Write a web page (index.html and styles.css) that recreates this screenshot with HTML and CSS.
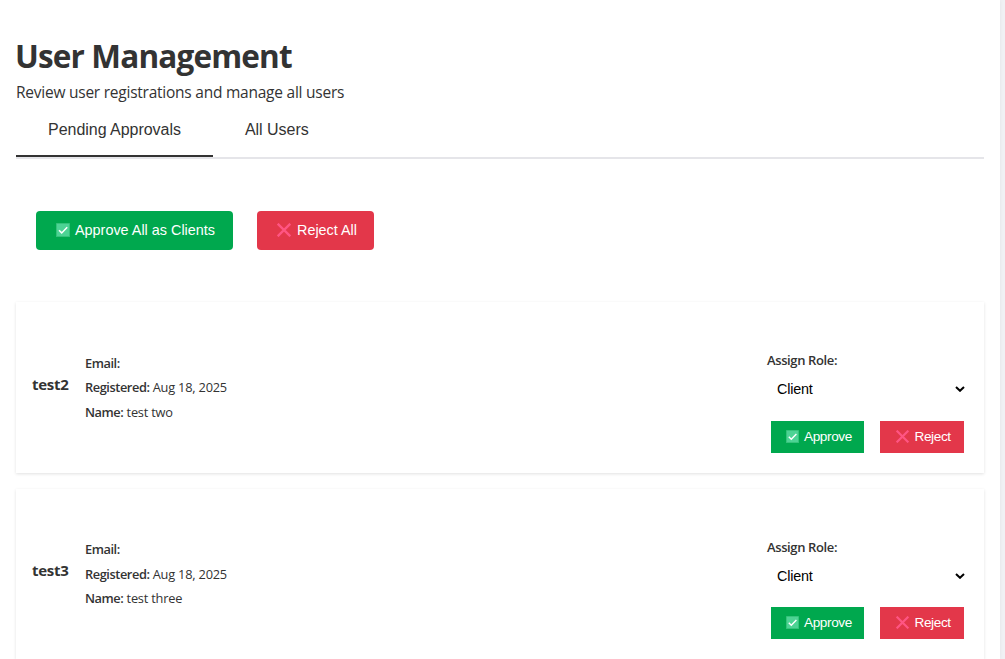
FILE: index.html
```html
<!DOCTYPE html>
<html lang="en">
<head>
<meta charset="utf-8">
<title>User Management</title>
<link rel="stylesheet" href="styles.css">
</head>
<body>
<svg class="defs" aria-hidden="true">
  <symbol id="check" viewBox="0 0 14 14">
    <rect width="14" height="14" rx=".6" fill="#35c27a"/>
    <rect x="1" y="1" width="12" height="12" fill="#4dd394"/>
    <path d="M3 7.2 5.7 9.9 11.2 4.2" fill="none" stroke="#fff" stroke-width="1.5"/>
  </symbol>
  <symbol id="cross" viewBox="0 0 14 14">
    <path d="M.7.7 13.3 13.3M13.3.7.7 13.3" fill="none" stroke="#ff5583" stroke-width="2.3"/>
  </symbol>
  <symbol id="chevron" viewBox="0 0 10 6">
    <path d="M1 1 5 4.8 9 1" fill="none" stroke="#000" stroke-width="2"/>
  </symbol>
</svg>
<main class="page">
  <h1 class="title"><span>User Management</span></h1>
  <p class="subtitle">Review user registrations and manage all users</p>
  <nav class="tabs">
    <button class="tab active">Pending Approvals</button>
    <button class="tab">All Users</button>
  </nav>
  <div class="bulk">
    <button class="btn approve"><svg class="icon"><use href="#check"/></svg><span>Approve All as Clients</span></button>
    <button class="btn reject"><svg class="icon"><use href="#cross"/></svg><span>Reject All</span></button>
  </div>
  <section class="cards">
    <article class="card">
      <h3 class="name">test2</h3>
      <div class="details">
        <p><strong>Email:</strong></p>
        <p><strong>Registered:</strong> <span>Aug 18, 2025</span></p>
        <p><strong>Name:</strong> <span>test two</span></p>
      </div>
      <div class="controls">
        <div class="label">Assign Role:</div>
        <div class="select" role="combobox"><span>Client</span><svg class="chevron"><use href="#chevron"/></svg></div>
        <div class="actions">
          <button class="btn small approve"><svg class="icon"><use href="#check"/></svg><span>Approve</span></button>
          <button class="btn small reject"><svg class="icon"><use href="#cross"/></svg><span>Reject</span></button>
        </div>
      </div>
    </article>
    <article class="card">
      <h3 class="name">test3</h3>
      <div class="details">
        <p><strong>Email:</strong></p>
        <p><strong>Registered:</strong> <span>Aug 18, 2025</span></p>
        <p><strong>Name:</strong> <span>test three</span></p>
      </div>
      <div class="controls">
        <div class="label">Assign Role:</div>
        <div class="select" role="combobox"><span>Client</span><svg class="chevron"><use href="#chevron"/></svg></div>
        <div class="actions">
          <button class="btn small approve"><svg class="icon"><use href="#check"/></svg><span>Approve</span></button>
          <button class="btn small reject"><svg class="icon"><use href="#cross"/></svg><span>Reject</span></button>
        </div>
      </div>
    </article>
  </section>
</main>
</body>
</html>
```
FILE: styles.css
```css
* { box-sizing: border-box; }
html { background: #f0f1f4; }
body { margin: 0; height: 659px; overflow: hidden; color: #333; font-family: "Open Sans", "Noto Sans", sans-serif; }
h1, h3, p { margin: 0; }
button { border: 0; padding: 0; background: none; font-family: "Liberation Sans", Arial, sans-serif; white-space: nowrap; }
.defs { display: none; }
.page { width: 1000px; height: 659px; padding: 36px 16px 0; overflow: hidden; background: #fff; box-shadow: 0 0 4px rgba(0,0,0,.06); }
.title { height: 40px; line-height: 39px; font-size: 31.5px; font-weight: 700; letter-spacing: -.84px; white-space: nowrap; margin-left: -1px; }
.subtitle { height: 27px; margin-top: 3px; line-height: 27px; font-size: 15.5px; letter-spacing: -.24px; }
.tabs { display: flex; height: 53px; border-bottom: 2px solid #e5e5e9; }
.tab { height: 51px; padding: 0 32px 2px; border-bottom: 2px solid transparent; color: #333; font-size: 16px; letter-spacing: -.03px; }
.tab.active { border-color: #333; }
.bulk { display: flex; gap: 24px; padding: 52px 20px; }
.btn { display: flex; align-items: center; width: 197px; height: 39px; padding: 0 0 1px 20px; border-radius: 4px; color: #fff; font-size: 14.4px; }
.btn .icon { width: 14px; height: 14px; margin-right: 5px; }
.approve { background: #00a84e; }
.reject { width: 117px; background: #e3374a; }
.reject .icon { margin-right: 6px; }
.cards { display: flex; flex-direction: column; gap: 16px; }
.card { display: flex; align-items: center; flex: none; height: 170.6px; padding: 0 16px; box-shadow: 0 1px 3px rgba(0,0,0,.12); }
.name { width: 53px; font-size: 15px; line-height: 24px; padding-bottom: 7px; font-weight: 700; letter-spacing: -.3px; }
.details { font-size: 12.8px; line-height: 24.4px; letter-spacing: -.2px; }
.details strong { font-weight: 600; letter-spacing: -.43px; }
.controls { width: 201px; margin-left: auto; margin-top: 28.2px; }
.label { height: 20px; line-height: 20px; font-size: 13px; font-weight: 600; letter-spacing: -.38px; }
.select { display: flex; align-items: center; justify-content: space-between; height: 38px; padding: 0 3px 0 10px; color: #000; font: 14.4px "Liberation Sans", Arial, sans-serif; letter-spacing: -.2px; }
.chevron { width: 10px; height: 6px; }
.actions { display: flex; gap: 16px; margin: 12.9px 0 0 4px; }
.btn.small { width: 93px; height: 32px; padding-left: 15px; border-radius: 0; font-size: 13.6px; letter-spacing: -.38px; }
.btn.small.reject { width: 84px; }
.btn.small .icon { width: 13px; height: 13px; }
.btn.small.reject .icon { margin-left: 1px; margin-right: 5.5px; }
```
